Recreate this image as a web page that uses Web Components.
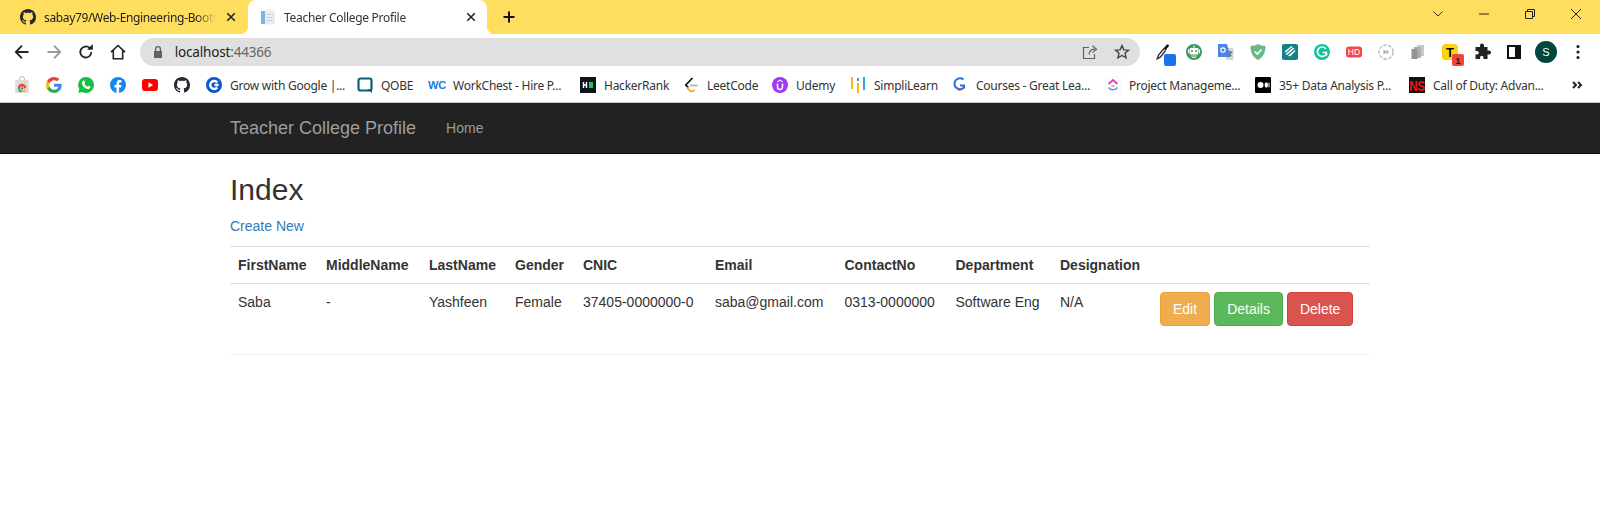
<!DOCTYPE html>
<html>
<head>
<meta charset="utf-8">
<title>Teacher College Profile</title>
<style>
html,body { margin:0; background:#fff; }
body { --ui-font:"Noto Sans","Open Sans",sans-serif; --web-font:"Liberation Sans",Arial,sans-serif; font:14px/20px var(--web-font); color:#333; }
</style>
</head>
<body>
<browser-tabs></browser-tabs>
<browser-toolbar></browser-toolbar>
<bookmark-bar>
    <bookmark-item icon="shop"></bookmark-item>
    <bookmark-item icon="google"></bookmark-item>
    <bookmark-item icon="whatsapp"></bookmark-item>
    <bookmark-item icon="facebook"></bookmark-item>
    <bookmark-item icon="youtube"></bookmark-item>
    <bookmark-item icon="github"></bookmark-item>
    <bookmark-item icon="grow" w="111">Grow with Google |...</bookmark-item>
    <bookmark-item icon="qobe" w="32">QOBE</bookmark-item>
    <bookmark-item icon="wc" w="111">WorkChest - Hire P...</bookmark-item>
    <bookmark-item icon="hackerrank" w="63">HackerRank</bookmark-item>
    <bookmark-item icon="leetcode" w="49">LeetCode</bookmark-item>
    <bookmark-item icon="udemy" w="38">Udemy</bookmark-item>
    <bookmark-item icon="simpli" w="62">SimpliLearn</bookmark-item>
    <bookmark-item icon="courses" w="113">Courses - Great Lea...</bookmark-item>
    <bookmark-item icon="clickup" w="110">Project Manageme...</bookmark-item>
    <bookmark-item icon="medium" w="114">35+ Data Analysis P...</bookmark-item>
    <bookmark-item icon="ns" w="110">Call of Duty: Advan...</bookmark-item>
</bookmark-bar>
<site-navbar brand="Teacher College Profile">
    <nav-link>Home</nav-link>
</site-navbar>
<teacher-index></teacher-index>

<script>
// all icons share a 16x16 box, some draw past it on purpose (badges)
const GH = 'M8 0C3.58 0 0 3.58 0 8c0 3.54 2.29 6.53 5.47 7.59.4.07.55-.17.55-.38 0-.19-.01-.82-.01-1.49-2.01.37-2.53-.49-2.69-.94-.09-.23-.48-.94-.82-1.13-.28-.15-.68-.52-.01-.53.63-.01 1.08.58 1.23.82.72 1.21 1.87.87 2.33.66.07-.52.28-.87.51-1.07-1.78-.2-3.64-.89-3.64-3.95 0-.87.31-1.59.82-2.15-.08-.2-.36-1.02.08-2.12 0 0 .67-.21 2.2.82.64-.18 1.32-.27 2-.27.68 0 1.36.09 2 .27 1.53-1.04 2.2-.82 2.2-.82.44 1.1.16 1.92.08 2.12.51.56.82 1.27.82 2.15 0 3.07-1.87 3.75-3.65 3.95.29.25.54.73.54 1.48 0 1.07-.01 1.93-.01 2.2 0 .21.15.46.55.38A8.013 8.013 0 0016 8c0-4.42-3.58-8-8-8z';
const label = (x,y,size,fill,txt,weight='700') => `<text x="${x}" y="${y}" font-family="Liberation Sans,Arial,sans-serif" font-size="${size}" font-weight="${weight}" fill="${fill}" text-anchor="middle">${txt}</text>`;
const ICONS = {
    github: `<path fill="#24292f" d="${GH}"/>`,
    page: `<path fill="#e6edf4" d="M5 .5h7l3 3v12H5z"/><path fill="#7fb3de" d="M1 2h4v13H1z"/><path fill="#c5d6e6" d="M6.5 5h7v1h-7zM6.5 8h7v1h-7zM6.5 11h7v1h-7z"/>`,
    close: `<path stroke="#222" stroke-width="1.7" d="M3.5 3.5l8 8M11.5 3.5l-8 8"/>`,
    plus: `<path stroke="#111" stroke-width="2" d="M8 2.500v11M2.500 8h11"/>`,
    chevron: `<path fill="none" stroke="#333" d="M3.500 5.500L8 10l4.500-4.500"/>`,
    min: `<path stroke="#222" d="M3 8h10"/>`,
    restore: `<path fill="none" stroke="#222" d="M3.500 5.500h7v7h-7zM5.500 5.500v-2h7v7h-2"/>`,
    winclose: `<path stroke="#222" d="M3 3l10 10M13 3L3 13"/>`,
    back: `<path fill="none" stroke="#222" stroke-width="1.8" d="M14.500 8H2M8 1.700L1.800 8 8 14.300"/>`,
    forward: `<path fill="none" stroke="#9a9a9a" stroke-width="1.8" d="M1.500 8H14M8 1.700L14.200 8 8 14.300"/>`,
    reload: `<path fill="none" stroke="#222" stroke-width="1.8" d="M13.300 8a5.500 5.500 0 1 1-1.600-3.900"/><path fill="#222" d="M9 5.800h5.800V0z"/>`,
    home: `<path fill="none" stroke="#222" stroke-width="1.6" d="M1 8.200L8 1.500l7 6.700M3.300 6.500v8.300h9.400V6.500"/>`,
    lock: `<path fill="#5f6368" d="M4 7h8v7H4z"/><path fill="none" stroke="#5f6368" stroke-width="1.4" d="M5.600 7V5a2.400 2.400 0 0 1 4.800 0v2"/>`,
    share: `<path fill="none" stroke="#5f6368" stroke-width="1.2" d="M7 3.500H1.500v11h11V10M7 10.500c.3-3.500 2.700-5.300 6-5.300M10.500 1.800l4 3.400-4 3.400"/>`,
    star: `<path fill="none" stroke="#444" stroke-width="1.4" d="M8 1.600l1.900 4.300 4.600.4-3.500 3 1.100 4.600L8 11.500l-4.100 2.400L5 9.300l-3.500-3 4.600-.4z"/>`,
    dropper: `<path fill="#111" d="M11 3l1.500-2.200c.6-.5 1.500-.5 2 0s.5 1.400 0 2L12.300 5l.5.500-1 1L9.500 4.200l1-1z"/><path fill="none" stroke="#333" stroke-width="1.4" d="M10 4.500L4.500 11 3.200 14.800l3.400-1.900L11.500 6.500"/><rect x="10" y="10" width="12" height="12" rx="2" fill="#1a73e8"/>`,
    robot: `<circle cx="8" cy="8" r="8" fill="#3f9a5f"/><rect x="3.500" y="4" width="9" height="6.500" rx="1" fill="#fff"/><circle cx="6" cy="7" r="1" fill="#3f9a5f"/><circle cx="10" cy="7" r="1" fill="#3f9a5f"/><path stroke="#fff" d="M8 1.500V4M2.500 5.500v3.500M13.500 5.500v3.500"/><path fill="#cfe8d6" d="M5 11.500h6v1H5zM6 13h4v1H6z"/>`,
    translate: `<path fill="#d5d7db" d="M6 4h9.500v12H8.500z"/><path fill="#4a86e8" d="M0 0h9l3.500 13H0z"/><circle cx="5" cy="6" r="2.200" fill="none" stroke="#fff" stroke-width="1.200"/><path stroke="#666" d="M10 8h4.500M12 7v1M10.800 13l2.600-5M11 9.500l3 3"/>`,
    shield: `<path fill="#68b984" d="M8 0c2 1.200 4.600 2 7.500 2 0 6.500-2 11-7.500 14C2.500 13 .5 8.500.5 2 3.400 2 6 1.200 8 0z"/><path fill="none" stroke="#fff" stroke-width="1.6" d="M4.700 7.500L7.300 10l4.200-4.500"/>`,
    teal: `<rect width="16" height="16" rx="2" fill="#13808a"/><path fill="#fff" d="M2.500 7.500L9.500 2l1 1-7 5.500zM3.500 10L11.500 3.500l1 1L5 11zM6 11.500L13 6l.5 1-5.500 5.500z"/>`,
    grammarly: `<circle cx="8" cy="8" r="8" fill="#15c39a"/><path fill="none" stroke="#fff" stroke-width="1.700" d="M12 5a4.700 4.700 0 1 0 .5 4.500M8.800 8.500h3.700v3"/>`,
    hd: `<rect y="2.500" width="16" height="11" rx="3" fill="#f04a45"/>` + label(8,11.200,8.500,'#fff','HD','400'),
    skip: `<circle cx="8" cy="8" r="7" fill="none" stroke="#bbb" stroke-width="1.400" stroke-dasharray="3.500 1.500"/><path fill="#aaa" d="M5.500 5.500L8.500 8l-3 2.500zM8.500 5.500L11 8l-2.500 2.500z"/>`,
    docs: `<path fill="#c8c8c8" d="M7 1h7v11H7z"/><path fill="#adadad" d="M4 3h7v11H4z"/><path fill="#939393" d="M1.500 5h6v10h-6z"/>`,
    tbadge: `<rect width="16" height="16" rx="3.500" fill="#fdd20f"/>` + label(8,12.500,13,'#111','T') + `<rect x="10" y="10" width="12" height="12" rx="2" fill="#f4433c"/>` + label(16,19.500,9.500,'#222','1'),
    puzzle: `<path fill="#222" d="M6 1.500a2 2 0 0 1 4 0V3h3.500v3.500H15a2 2 0 0 1 0 4h-1.500V15H9.500v-1.500a1.700 1.700 0 0 0-3.400 0V15H1.500v-4.500H3a1.800 1.800 0 0 0 0-3.600H1.500V3H6z"/>`,
    panel: `<path fill="none" stroke="#111" stroke-width="2" d="M2 2h12v12H2z"/><path fill="#111" d="M9 2h5v12H9z"/>`,
    avatar: `<circle cx="8" cy="8" r="11" fill="#00473e"/>` + label(8,12,11,'#fff','S','400'),
    dots: `<circle cx="8" cy="2.500" r="1.600" fill="#222"/><circle cx="8" cy="8" r="1.600" fill="#222"/><circle cx="8" cy="13.500" r="1.600" fill="#222"/>`,
    shop: `<path fill="none" stroke="#bbb" d="M5.500 3V2a2.500 2.500 0 0 1 5 0v1"/><path fill="#dcdcdc" d="M1.500 3h13l.5 13H1z"/><path fill="#e8453c" d="M3.800 11a4.200 4.200 0 0 1 8.400 0z"/><path fill="#34a853" d="M3.800 11h4.200v4H5z"/><path fill="#fbbc05" d="M8 11h4.200L11 15H8z"/><circle cx="8" cy="11.500" r="1.800" fill="#4285f4" stroke="#fff" stroke-width=".6"/>`,
    google: `<g transform="scale(.3333)"><path fill="#EA4335" d="M24 9.500c3.540 0 6.710 1.220 9.210 3.600l6.850-6.850C35.900 2.380 30.470 0 24 0 14.620 0 6.510 5.380 2.560 13.220l7.980 6.190C12.430 13.720 17.740 9.500 24 9.500z"/><path fill="#4285F4" d="M46.980 24.550c0-1.570-.15-3.090-.38-4.550H24v9.020h12.940c-.58 2.960-2.260 5.480-4.780 7.180l7.730 6c4.510-4.180 7.090-10.360 7.090-17.650z"/><path fill="#FBBC05" d="M10.530 28.590c-.48-1.450-.76-2.990-.76-4.590s.27-3.140.76-4.590l-7.980-6.190C.92 16.460 0 20.120 0 24c0 3.880.92 7.540 2.560 10.780l7.970-6.190z"/><path fill="#34A853" d="M24 48c6.480 0 11.930-2.130 16.090-5.810l-7.730-6c-2.150 1.450-4.920 2.300-8.360 2.300-6.260 0-11.570-4.220-13.470-9.910l-7.980 6.190C6.510 42.620 14.620 48 24 48z"/></g>`,
    whatsapp: `<path fill="#0fc244" d="M8 0a8 8 0 0 1 0 16c-1.400 0-2.700-.4-3.800-1L.3 16l1-3.800A8 8 0 0 1 8 0z"/><path fill="#fff" d="M5.300 3.800c.5-.4 1-.3 1.200.2l.6 1.400c.1.300 0 .6-.2.800l-.5.600c.5 1.200 1.500 2.200 2.900 2.900l.7-.7c.2-.2.500-.3.800-.1l1.400.7c.4.200.5.600.3 1-.5 1.200-1.600 1.700-2.900 1.400-3.100-.8-5.200-3-5.600-5.800-.1-1 .4-1.900 1.300-2.400z"/>`,
    facebook: `<circle cx="8" cy="8" r="8" fill="#1686ee"/><path fill="#fff" d="M9.100 16v-5.600h1.900l.4-2.400H9.100V6.600c0-.7.300-1.200 1.300-1.200h1V3.300c-.5-.1-1.100-.2-1.700-.2-2 0-3.200 1.200-3.200 3.300V8H4.500v2.400h2V16z"/>`,
    youtube: `<rect y="2" width="16" height="12" rx="3" fill="#f00"/><path fill="#fff" d="M6.500 5.300L11 8l-4.500 2.700z"/>`,
    grow: `<circle cx="8" cy="8" r="8" fill="#0b57d0"/><path fill="none" stroke="#fff" stroke-width="2.400" d="M11.300 5.500a4 4 0 1 0 0 5M8.500 8h4"/>`,
    qobe: `<path fill="none" stroke="#0f5f7c" stroke-width="2.200" d="M3.500 1.500h9a2 2 0 0 1 2 2v8a2 2 0 0 1-2 2h-9a2 2 0 0 1-2-2v-8a2 2 0 0 1 2-2z"/><path fill="#0f5f7c" d="M10 12h5v4z"/>`,
    wc: label(8,12,11,'#1a7be8','WC'),
    hackerrank: `<rect width="16" height="16" fill="#0e141e"/><path stroke="#fff" stroke-width="1.400" d="M3.500 5v6M6.500 5v6M3.500 8h3"/><rect x="9" y="5" width="4" height="6" fill="#1ec65b"/>`,
    leetcode: `<path fill="none" stroke="#111" stroke-width="1.700" d="M9.500 1L2.800 8l2.500 2.700"/><path fill="none" stroke="#f89f1b" stroke-width="1.700" d="M4 10.500l2.500 3c1.500 1.200 3.500 1 5-.7"/><path stroke="#b3b3b3" stroke-width="1.700" d="M7 8.500h8"/>`,
    udemy: `<circle cx="8" cy="8" r="8" fill="#a435f0"/><path fill="none" stroke="#fff" stroke-width="1.500" d="M5.500 6.500v3.500a2.500 2.500 0 0 0 5 0V6.500"/><path fill="#fff" d="M8 2.500l3 2-.5.700L8 3.700 5.500 5.200 5 4.500z"/>`,
    simpli: `<path fill="#fdb515" d="M1 0h2v12H1zM7 6h2v10H7z"/><path fill="#2aa7e8" d="M7 1h2v3H7zM13 0h2v13h-2z"/>`,
    courses: `<path fill="none" stroke="#2f6fd8" stroke-width="2" d="M11.500 2.500A5.500 5.500 0 1 0 12 10.500V8.500H8"/><path fill="none" stroke="#e8655a" stroke-width="1" d="M5 12.500c1 .8 2.500 1.200 4 .8"/>`,
    clickup: `<rect width="16" height="16" rx="3" fill="#fff" stroke="#eee" stroke-width=".6"/><path fill="none" stroke="#e23dc4" stroke-width="1.700" d="M3.500 7L8 3l4.500 4"/><path fill="none" stroke="#49a3f5" stroke-width="1.700" d="M3.500 10.500c2.500 3 6.500 3 9 0"/><path stroke="#ff9a3c" stroke-width="1.700" d="M6.500 9h3"/>`,
    medium: `<rect width="16" height="16" rx="1" fill="#000"/><circle cx="5.500" cy="8" r="3" fill="#fff"/><ellipse cx="11.300" cy="8" rx="1.700" ry="2.800" fill="#fff"/><rect x="13.500" y="5.600" width="1" height="4.800" fill="#fff"/>`,
    ns: `<rect width="16" height="16" fill="#111"/><g transform="scale(1 1.350)">` + label(8,10.400,11.500,'#f01414','NS') + `</g>`,
    more: `<path fill="none" stroke="#222" stroke-width="2" d="M4 5l3 3-3 3M9 5l3 3-3 3"/>`,
};

customElements.define('x-icon', class extends HTMLElement {
    connectedCallback() {
        const size = this.getAttribute('size') || 16;
        const shadow = this.shadowRoot || this.attachShadow({mode:'open'});
        shadow.innerHTML = `
        <style>
        :host { display:inline-flex; flex:none; width:${size}px; height:${size}px; }
        svg { overflow:visible; display:block; }
        </style>
        <svg width="${size}" height="${size}" viewBox="0 0 16 16">${ICONS[this.getAttribute('name')] || ''}</svg>`;
    }
});

customElements.define('browser-tab', class extends HTMLElement {
    constructor() {
        super();
        this.attachShadow({mode:'open'}).innerHTML = `
        <style>
        :host { display:flex; align-items:center; position:relative; box-sizing:border-box; height:34px; width:240px; padding:0 9px 0 12px; gap:8px; font:12px var(--ui-font); color:#222; letter-spacing:-.35px; }
        :host([active]) { width:239px; padding:0 8.5px 0 12px; background:#fff; border-radius:8px 8px 0 0; color:#333; letter-spacing:-.3px; }
        :host([active])::before, :host([active])::after { content:''; position:absolute; bottom:0; width:8px; height:8px; }
        :host([active])::before { left:-8px; background:radial-gradient(circle at 0 0, transparent 8px, #fff 8.5px); }
        :host([active])::after { right:-8px; background:radial-gradient(circle at 100% 0, transparent 8px, #fff 8.5px); }
        .title { flex:1; min-width:0; white-space:nowrap; overflow:hidden; -webkit-mask-image:linear-gradient(90deg,#000 calc(100% - 20px),transparent); mask-image:linear-gradient(90deg,#000 calc(100% - 20px),transparent); }
        </style>
        <slot name="icon"></slot>
        <span class="title"><slot></slot></span>
        <x-icon name="close" size="15"></x-icon>`;
    }
});

customElements.define('browser-tabs', class extends HTMLElement {
    constructor() {
        super();
        this.attachShadow({mode:'open'}).innerHTML = `
        <style>
        :host { display:flex; height:34px; background:#ffdd5e; padding-left:8px; }
        .new { display:flex; align-items:center; margin-left:14px; }
        .win { display:flex; margin-left:auto; padding-right:1.5px; }
        .win span { width:46px; height:28px; display:flex; align-items:center; justify-content:center; }
        </style>
        <browser-tab><x-icon slot="icon" name="github"></x-icon>sabay79/Web-Engineering-BootCamp</browser-tab>
        <browser-tab active><x-icon slot="icon" name="page"></x-icon>Teacher College Profile</browser-tab>
        <div class="new"><x-icon name="plus"></x-icon></div>
        <div class="win">
            <span><x-icon name="chevron"></x-icon></span>
            <span><x-icon name="min"></x-icon></span>
            <span><x-icon name="restore"></x-icon></span>
            <span><x-icon name="winclose"></x-icon></span>
        </div>`;
    }
});

customElements.define('browser-toolbar', class extends HTMLElement {
    constructor() {
        super();
        const btn = n => `<span class="btn"><x-icon name="${n}"></x-icon></span>`;
        this.attachShadow({mode:'open'}).innerHTML = `
        <style>
        :host { display:flex; align-items:center; box-sizing:border-box; height:34px; background:#fff; padding:2px 6px 0 6px; }
        .btn { width:32px; display:flex; justify-content:center; flex:none; }
        .omni { flex:1; height:28px; margin:0 6px; background:#e0e0e0; border-radius:14px; display:flex; align-items:center; padding:0 10px; font:13.5px var(--ui-font); color:#222; }
        .omni .url { margin-left:8.7px; flex:1; letter-spacing:-.17px; }
        .omni .url i { font-style:normal; color:#666; }
        .omni x-icon + x-icon { margin-left:16px; }
        </style>
        ${['back','forward','reload','home'].map(btn).join('')}
        <div class="omni">
            <x-icon name="lock"></x-icon>
            <span class="url">localhost<i>:44366</i></span>
            <x-icon name="share"></x-icon>
            <x-icon name="star"></x-icon>
        </div>
        ${['dropper','robot','translate','shield','teal','grammarly','hd','skip','docs','tbadge','puzzle','panel','avatar','dots'].map(btn).join('')}`;
    }
});

customElements.define('bookmark-item', class extends HTMLElement {
    connectedCallback() {
        if (this.shadowRoot) return;
        const w = this.getAttribute('w');
        this.attachShadow({mode:'open'}).innerHTML = `
        <style>
        :host { display:flex; align-items:center; flex:none; gap:8px; height:34px; padding:0 8px; font:12px var(--ui-font); color:#333; letter-spacing:-.25px; }
        .t { white-space:nowrap; width:${w}px; }
        </style>
        <x-icon name="${this.getAttribute('icon')}"></x-icon>
        ${w ? '<span class="t"><slot></slot></span>' : ''}`;
    }
});

customElements.define('bookmark-bar', class extends HTMLElement {
    constructor() {
        super();
        this.attachShadow({mode:'open'}).innerHTML = `
        <style>
        :host { display:flex; height:34px; padding-left:6px; background:#fff; border-bottom:1px solid #c8c8c8; }
        .more { margin-left:auto; margin-right:15px; display:flex; align-items:center; }
        </style>
        <slot></slot>
        <div class="more"><x-icon name="more"></x-icon></div>`;
    }
});

customElements.define('nav-link', class extends HTMLElement {
    constructor() {
        super();
        this.attachShadow({mode:'open'}).innerHTML = `
        <style>
        :host { display:block; padding:15px; color:#9d9d9d; font:14px/20px var(--web-font); }
        </style>
        <slot></slot>`;
    }
});

customElements.define('site-navbar', class extends HTMLElement {
    constructor() {
        super();
        this.attachShadow({mode:'open'}).innerHTML = `
        <style>
        :host { display:block; background:#222; border-bottom:1px solid #080808; }
        .wrap { width:1140px; margin:0 auto; display:flex; height:50px; }
        .brand { font:18px/20px var(--web-font); color:#9d9d9d; padding:15px 15px 15px 0; }
        </style>
        <div class="wrap">
            <span class="brand">${this.getAttribute('brand')}</span>
            <slot></slot>
        </div>`;
    }
});

customElements.define('x-button', class extends HTMLElement {
    constructor() {
        super();
        this.attachShadow({mode:'open'}).innerHTML = `
        <style>
        :host { display:inline-block; box-sizing:border-box; height:34px; padding:6px 12px; border:1px solid; border-radius:4px; color:#fff; font:14px/20px var(--web-font); }
        :host([kind=warning]) { background:#f0ad4e; border-color:#eea236; }
        :host([kind=success]) { background:#5cb85c; border-color:#4cae4c; }
        :host([kind=danger])  { background:#d9534f; border-color:#d43f3a; }
        </style>
        <slot></slot>`;
    }
});

customElements.define('teacher-index', class extends HTMLElement {
    constructor() {
        super();
        const cols = ['FirstName','MiddleName','LastName','Gender','CNIC','Email','ContactNo','Department','Designation',''];
        const row = ['Saba','-','Yashfeen','Female','37405-0000000-0','saba@gmail.com','0313-0000000','Software Eng','N/A'];
        const widths = [88,103,86,68,132,129.5,111,104.5,100,218];
        this.attachShadow({mode:'open'}).innerHTML = `
        <style>
        :host { display:block; width:1140px; margin:0 auto; font:14px/20px var(--web-font); color:#333; }
        h2 { font:500 30px/33px var(--web-font); margin:19px 0 10px; }
        p { margin:0 0 10px; }
        a { color:#337ab7; text-decoration:none; }
        table { width:100%; table-layout:fixed; border-collapse:collapse; }
        th, td { padding:8px; text-align:left; vertical-align:top; white-space:nowrap; }
        th { border-top:1px solid #ddd; border-bottom:1px solid #ddd; }
        td { height:54px; border-bottom:1px solid #eee; }
        .btns { display:flex; gap:4px; }
        </style>
        <h2>Index</h2>
        <p><a href="#">Create New</a></p>
        <table>
            <colgroup>${widths.map(w=>`<col style="width:${w}px">`).join('')}</colgroup>
            <thead><tr>${cols.map(c=>`<th>${c}</th>`).join('')}</tr></thead>
            <tbody><tr>
                ${row.map(c=>`<td>${c}</td>`).join('')}
                <td><div class="btns">
                    <x-button kind="warning">Edit</x-button>
                    <x-button kind="success">Details</x-button>
                    <x-button kind="danger">Delete</x-button>
                </div></td>
            </tr></tbody>
        </table>`;
    }
});
</script>
</body>
</html>
